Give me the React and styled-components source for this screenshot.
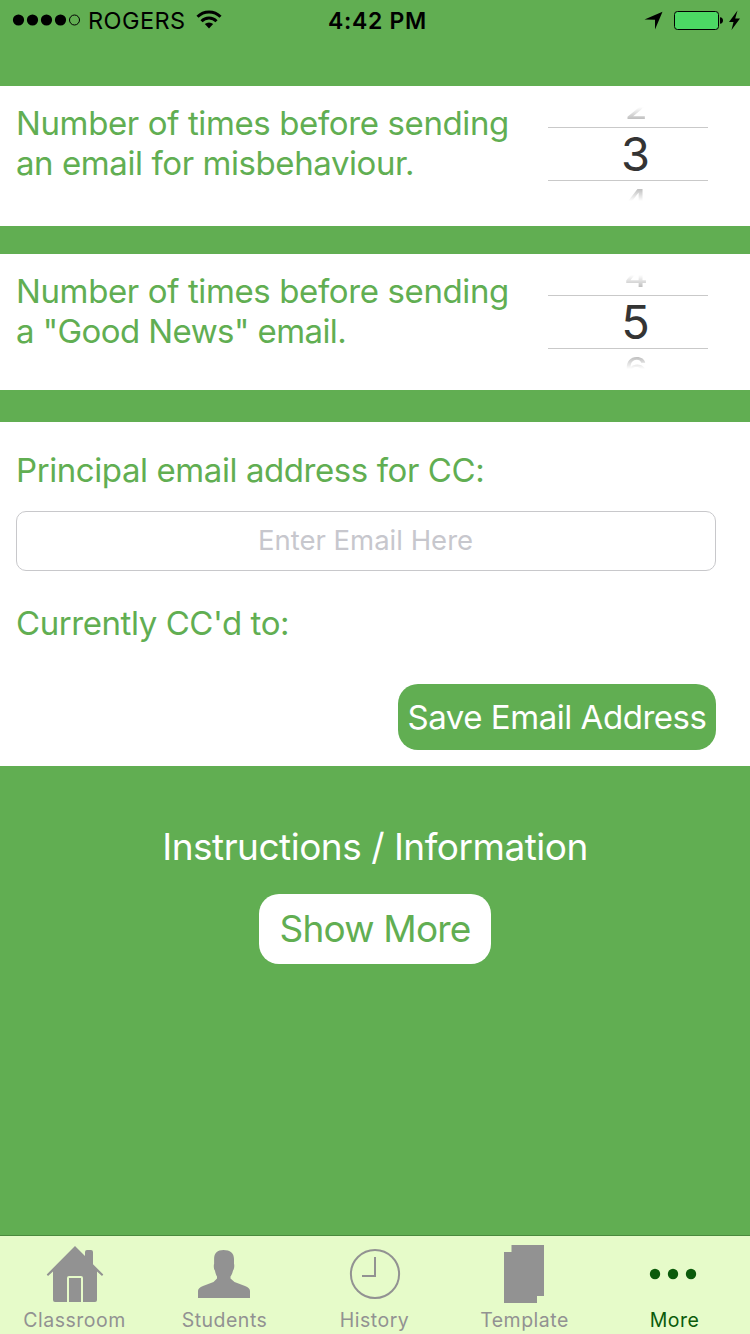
import React from "react";
import styled, { createGlobalStyle } from "styled-components";

const GREEN = "#61ae52";

const GlobalStyle = createGlobalStyle`
  *, *::before, *::after { box-sizing: border-box; }
  body {
    margin: 0;
    background: ${GREEN};
    font-family: Inter, "Liberation Sans", sans-serif;
  }
`;

const Screen = styled.main`
  display: flex;
  flex-direction: column;
  width: 750px;
  height: 1334px;
  overflow: hidden;
  background: ${GREEN};
`;

const StatusBar = styled.header`
  display: grid;
  grid-template-columns: 1fr auto 1fr;
  align-items: center;
  flex: none;
  height: 40px;
  margin-bottom: 46px;
  padding: 0 9px 0 12px;
  color: #000;
`;

const StatusGroup = styled.div`
  display: flex;
  align-items: center;
  justify-content: ${(p) => p.$justify || "flex-start"};
`;

const Carrier = styled.span`
  margin: 2px 10px 0 7px;
  font-size: 23.5px;
  line-height: 30px;
  letter-spacing: 0.45px;
`;

const Clock = styled.time`
  margin: 2px 0 0 2px;
  font-size: 23px;
  font-weight: 600;
  line-height: 30px;
  letter-spacing: 0.7px;
`;

const Panel = styled.section`
  flex: none;
  height: ${(p) => p.$height}px;
  margin-bottom: ${(p) => p.$gap || 0}px;
  background: #fff;
`;

const CounterPanel = styled(Panel)`
  display: flex;
  justify-content: space-between;
  padding: 18px 42px 0 16px;
`;

const Label = styled.p`
  margin: -1px 0 1px;
  color: ${GREEN};
  font-size: 33px;
  line-height: 40px;
  letter-spacing: -0.4px;
  white-space: nowrap;
`;

const LabelLine = styled.span`
  display: block;
  letter-spacing: ${(p) => p.$spacing}px;
`;

const Picker = styled.div`
  width: 160px;
  text-align: center;
`;

const PickerEdge = styled.div`
  height: 23px;
  padding-left: 16px;
  color: #bfbfbf;
  font-size: 36px;
  font-weight: 500;
  line-height: 36px;
  -webkit-mask-image: linear-gradient(
    ${(p) => (p.$below ? "to bottom" : "to top")},
    #000 8px,
    transparent 20px
  );
`;

const PickerDigit = styled.span`
  display: block;
  transform-origin: 50% 0;
  transform: translateY(${(p) => p.$shift}px) scaleY(0.78);
`;

const PickerValue = styled.div`
  height: 54px;
  padding-left: 15px;
  border: solid #c9c9c9;
  border-width: 1px 0;
  color: #343434;
  font-size: 47px;
  line-height: 52px;
`;

const EmailPanel = styled(Panel)`
  display: flex;
  flex-direction: column;
  padding: 29px 34px 16px 16px;
`;

const EmailInput = styled.input`
  height: 60px;
  margin: 20px 0 33px;
  padding: 0 1px 3px 0;
  border: 1px solid #c8c8cb;
  border-radius: 10px;
  outline: none;
  background: #fff;
  font-family: inherit;
  font-size: 27.5px;
  text-align: center;
  &::placeholder {
    color: #c7c7cd;
    opacity: 1;
  }
`;

const Button = styled.button`
  padding: 0;
  border: 0;
  font-family: inherit;
  font-weight: inherit;
  white-space: nowrap;
`;

const SaveButton = styled(Button)`
  align-self: flex-end;
  width: 318px;
  height: 66px;
  margin-top: auto;
  border-radius: 20px;
  background: ${GREEN};
  color: #fff;
  font-size: 33px;
  letter-spacing: -0.46px;
`;

const Info = styled.section`
  display: flex;
  flex: 1;
  flex-direction: column;
  align-items: center;
  padding-top: 57px;
`;

const InfoTitle = styled.h2`
  margin: 0 0 23px;
  color: #fff;
  font-size: 37px;
  font-weight: inherit;
  line-height: 48px;
  letter-spacing: -0.5px;
`;

const MoreButton = styled(Button)`
  width: 232px;
  height: 70px;
  padding-bottom: 2px;
  border-radius: 20px;
  background: #fff;
  color: ${GREEN};
  font-size: 37px;
  letter-spacing: -0.8px;
`;

const TabBar = styled.nav`
  display: grid;
  grid-template-columns: repeat(5, 150px);
  flex: none;
  height: 99px;
  border-top: 1px solid #4b8a3e;
  background: #e6fbc9;
`;

const Tab = styled.a`
  display: flex;
  flex-direction: column;
  align-items: center;
  padding-top: 8px;
  color: ${(p) => (p.$active ? "#0b5b0b" : "#929292")};
`;

const TabLabel = styled.span`
  margin: 4px 1px 0 0;
  font-size: 19.5px;
  line-height: 24px;
  letter-spacing: 0.5px;
`;

function SignalDots() {
  return (
    <svg width="69" height="12" viewBox="0 0 69 12">
      {[0, 1, 2, 3].map((i) => (
        <circle key={i} cx={6.5 + i * 14} cy="6" r="5.6" />
      ))}
      <circle cx="62.5" cy="6" r="5" fill="none" stroke="#000" />
    </svg>
  );
}

function Wifi() {
  return (
    <svg width="26" height="20" viewBox="0 0 26 20" fill="none" stroke="#000" strokeWidth="3">
      <path d="M1.5 6.8a16.3 16.3 0 0 1 23 0" />
      <path d="M5.5 11.2a10.6 10.6 0 0 1 15 0" />
      <path d="M13 18.5l-4.2-4.4a6 6 0 0 1 8.4 0z" fill="#000" stroke="none" />
    </svg>
  );
}

function StatusIcons() {
  return (
    <svg width="98" height="24" viewBox="0 0 98 24">
      <path d="M1.5 11.5L19.5 3.8 12 21.5V11.7z" />
      <rect x="31.5" y="3.5" width="44" height="18" rx="3" fill="#4cd964" stroke="#000" />
      <path d="M77 9.2c4 0 4 6.6 0 6.6z" />
      <path d="M94.5 2.5L86 14h4.5l-2 8L97 10.4h-4.8z" />
    </svg>
  );
}

function HomeIcon() {
  return (
    <svg width="60" height="60" viewBox="0 0 60 60" fill="currentColor">
      <path d="M30 2L40 12V8q0-2 2-2h4q2 0 2 2v12.3L58.3 30.5 57 32l-5-4.5V56q0 2-2 2H38V34q0-2-2-2H24q-2 0-2 2v24H10q-2 0-2-2V27.5L3 32l-1.3-1.5z" />
      <path d="M24 34h12v24H24z" />
    </svg>
  );
}

function PersonIcon() {
  return (
    <svg width="60" height="60" viewBox="1 0 60 60" fill="currentColor">
      <path d="M29.500 6C36 6 40 9 40 15v5c.6.8.2 5.500-1 6.500-.5 2.500-1.300 4.200-2.500 6v2L40.500 38 51 42q5 2 5 5v7H4v-7q0-3 5-5l10.500-4 3.500-3.500v-2c-1-1.800-1.600-3.500-2.100-6-1.200-1-1.400-5.700-.8-6.500v-5c0-6 3.400-9 9.400-9z" />
    </svg>
  );
}

function HistoryIcon() {
  return (
    <svg width="60" height="60" viewBox="0 0 60 60" fill="none" stroke="currentColor" strokeWidth="2">
      <circle cx="30" cy="30" r="24.1" />
      <path d="M30 13v19H17" />
    </svg>
  );
}

function TemplateIcon() {
  return (
    <svg width="60" height="60" viewBox="0 0 60 60" fill="currentColor">
      <path d="M16.500 1H49v51h-7v7H9V8h7.500z" />
    </svg>
  );
}

function MoreIcon() {
  return (
    <svg width="60" height="60" viewBox="0 0 60 60" fill="currentColor">
      {[10, 28, 46].map((x) => (
        <circle key={x} cx={x} cy="30" r="5.2" />
      ))}
    </svg>
  );
}

function NumberPicker({ value }) {
  return (
    <Picker>
      <PickerEdge>
        <PickerDigit $shift={-9}>{value - 1}</PickerDigit>
      </PickerEdge>
      <PickerValue>{value}</PickerValue>
      <PickerEdge $below>
        <PickerDigit $shift={4.5}>{value + 1}</PickerDigit>
      </PickerEdge>
    </Picker>
  );
}

const tabs = [
  { label: "Classroom", Icon: HomeIcon },
  { label: "Students", Icon: PersonIcon },
  { label: "History", Icon: HistoryIcon },
  { label: "Template", Icon: TemplateIcon },
  { label: "More", Icon: MoreIcon, active: true },
];

export default function App() {
  return (
    <Screen>
      <GlobalStyle />
      <StatusBar>
        <StatusGroup>
          <SignalDots />
          <Carrier>ROGERS</Carrier>
          <Wifi />
        </StatusGroup>
        <Clock>4:42 PM</Clock>
        <StatusGroup $justify="flex-end">
          <StatusIcons />
        </StatusGroup>
      </StatusBar>

      <CounterPanel $height={140} $gap={28}>
        <Label>
          <LabelLine $spacing={-0.38}>Number of times before sending</LabelLine>
          <LabelLine $spacing={-0.42}>an email for misbehaviour.</LabelLine>
        </Label>
        <NumberPicker value={3} />
      </CounterPanel>

      <CounterPanel $height={136} $gap={32}>
        <Label>
          <LabelLine $spacing={-0.38}>Number of times before sending</LabelLine>
          <LabelLine $spacing={-0.57}>a "Good News" email.</LabelLine>
        </Label>
        <NumberPicker value={5} />
      </CounterPanel>

      <EmailPanel $height={344}>
        <Label>
          <LabelLine $spacing={-0.42}>Principal email address for CC:</LabelLine>
        </Label>
        <EmailInput placeholder="Enter Email Here" />
        <Label>
          <LabelLine $spacing={-0.43}>Currently CC'd to:</LabelLine>
        </Label>
        <SaveButton>Save Email Address</SaveButton>
      </EmailPanel>

      <Info>
        <InfoTitle>Instructions / Information</InfoTitle>
        <MoreButton>Show More</MoreButton>
      </Info>

      <TabBar>
        {tabs.map(({ label, Icon, active }) => (
          <Tab key={label} $active={active}>
            <Icon />
            <TabLabel>{label}</TabLabel>
          </Tab>
        ))}
      </TabBar>
    </Screen>
  );
}
